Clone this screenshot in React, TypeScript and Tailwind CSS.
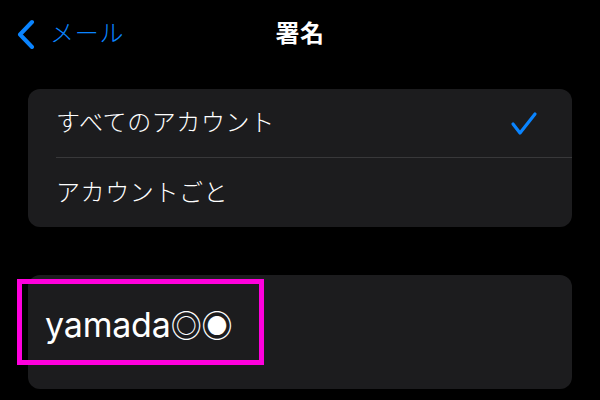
import React from 'react';

const font = { fontFamily: '"Inter", "Noto Sans CJK JP", sans-serif' };

function BackChevron() {
  return (
    <svg width="22" height="30" viewBox="0 0 22 30" fill="none" stroke="#0a84ff" strokeWidth="4" strokeLinecap="round" strokeLinejoin="round">
      <path d="M17 3 L5 15.5 L17 28" />
    </svg>
  );
}

function Check() {
  return (
    <svg width="28" height="26" viewBox="0 0 28 26" fill="none" stroke="#0a84ff" strokeWidth="3.2" strokeLinecap="round" strokeLinejoin="round">
      <path d="M3 14 L10 23 L25 4" />
    </svg>
  );
}

export default function App() {
  return (
    <div className="relative w-[600px] h-[400px] bg-black overflow-hidden text-white" style={font}>
      {/* Nav bar */}
      <div className="relative h-[68px] flex items-center">
        <div className="flex items-center pl-[15px] gap-[13px] text-[#0a84ff]">
          <BackChevron />
          <span className="text-[24px] leading-none font-light tracking-[0.8px]">メール</span>
        </div>
        <div className="absolute inset-x-0 top-0 h-full flex items-center justify-center pointer-events-none">
          <span className="text-[24px] font-bold leading-none tracking-[0.5px]">署名</span>
        </div>
      </div>

      {/* Account choice */}
      <div className="mt-[21px] mx-[28px] bg-[#1c1c1e] rounded-[12px]">
        <div className="h-[68px] flex items-center justify-between pl-[28px] pr-[34px]">
          <span className="text-[24px] leading-none font-light tracking-[0.6px]">すべてのアカウント</span>
          <Check />
        </div>
        <div className="ml-[28px] h-px bg-[#38383a]" />
        <div className="h-[69px] flex items-center pl-[28px]">
          <span className="text-[24px] leading-none font-light tracking-[0.6px]">アカウントごと</span>
        </div>
      </div>

      {/* Signature */}
      <div className="mt-[48px] mx-[28px] h-[114px] bg-[#1c1c1e] rounded-[12px] pl-[17px] pt-[26px]">
        <span className="text-[34px] leading-[48px] tracking-[-0.2px]">
          yamada<span className="text-[31px]">◎◉</span>
        </span>
      </div>

      {/* Highlight annotation */}
      <div className="absolute left-[17px] top-[279px] w-[247px] h-[86px] border-[5px] border-[#ff00dd]" />
    </div>
  );
}
